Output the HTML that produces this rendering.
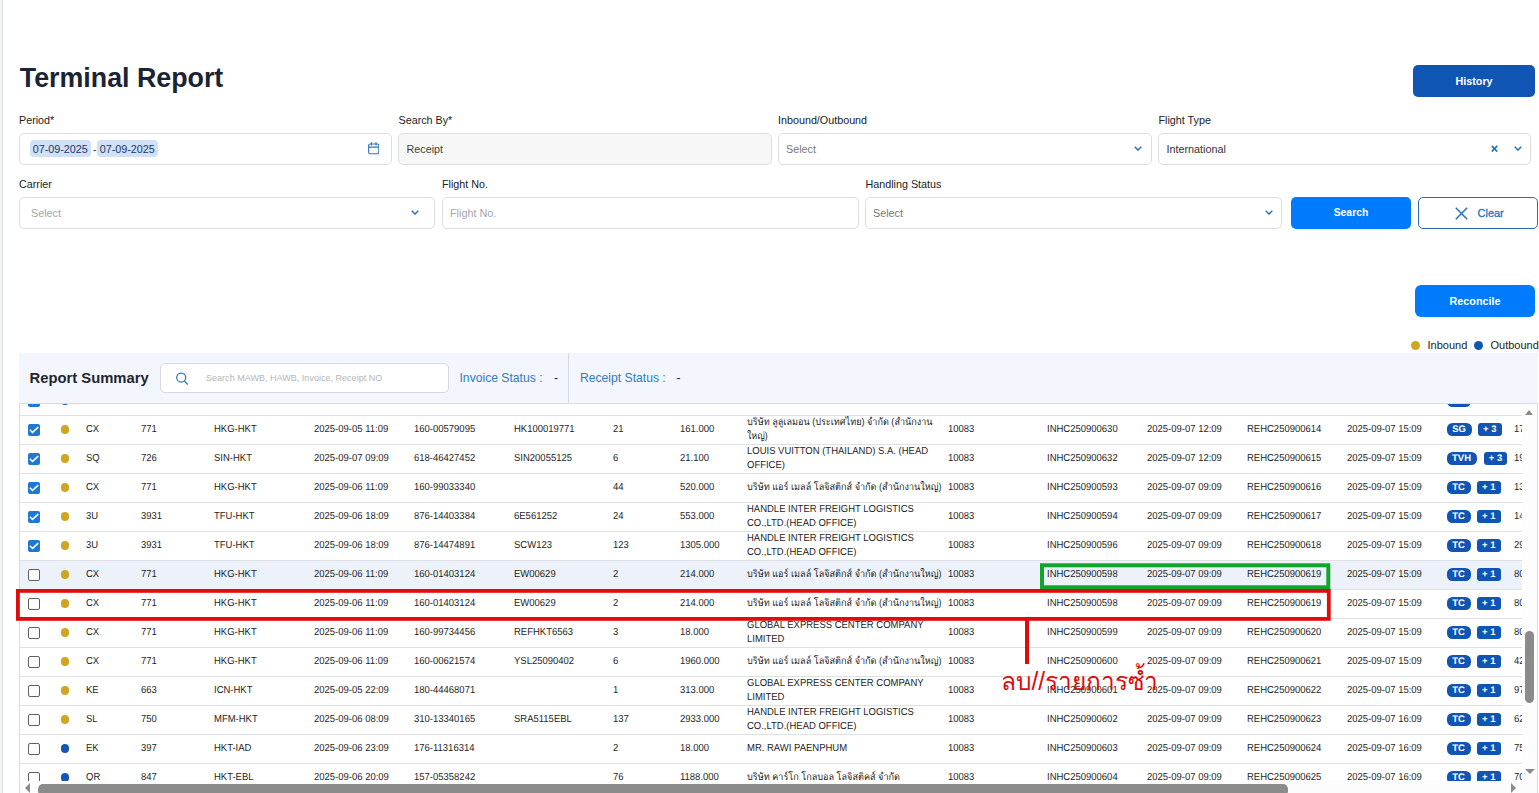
<!DOCTYPE html>
<html lang="en">
<head>
<meta charset="utf-8">
<title>Terminal Report</title>
<style>
*{box-sizing:border-box;margin:0;padding:0}
html,body{width:1539px;height:793px;overflow:hidden;background:#fff}
body{font-family:"Liberation Sans",sans-serif;color:#222;position:relative;font-size:11px}
.abs{position:absolute}
#lline{position:absolute;left:0;top:0;width:3px;height:793px;background:#f4f4f5;border-right:1px solid #d8dbe2}
h1{position:absolute;left:19.8px;top:60.7px;font-size:26.8px;line-height:34px;font-weight:700;color:#1b2432;white-space:nowrap;letter-spacing:0}
.lbl{position:absolute;font-size:10.75px;line-height:14px;color:#222;white-space:nowrap}
.inp{position:absolute;height:32px;border:1px solid #dcdfe2;border-radius:5px;background:#fff;font-size:10.8px;line-height:31px;color:#333;white-space:nowrap}
.inp .ph{position:absolute;left:11px;top:0;color:#a3a7ab}
.inp .val{position:absolute;left:7.5px;top:0;color:#444}
.inp svg{position:absolute}
.dis{background:#f7f7f8}
.hl{position:absolute;top:5.5px;height:17px;width:60.5px;border-radius:4px;background:#cfe0f7;color:#1c3766;line-height:18px;text-align:center;font-size:10.8px}
.btn{position:absolute;height:32px;border-radius:5px;color:#fff;font-weight:700;font-size:10.8px;line-height:32px;text-align:center;white-space:nowrap}
#hist{left:1413px;top:65px;width:122px;background:#1055b3}
#srch{left:1291px;top:197px;width:120px;background:#007bfd;font-size:10.4px}
#recon{left:1415px;top:285px;width:120px;background:#007bfd;border-radius:6px}
#clr{left:1418px;top:197px;width:120px;background:#fff;border:1px solid #2a6fad;color:#2274c4;font-weight:400}
#clr svg{position:absolute;left:36.4px;top:9px}
#clr span{position:absolute;left:58.5px;top:-1px;font-size:11px;-webkit-text-stroke:0.3px #2274c4}
.lg{position:absolute;top:338px;font-size:11px;line-height:14px;color:#222;white-space:nowrap}
.ldot{position:absolute;width:9.5px;height:9.5px;border-radius:50%;top:340.7px}
#panel{position:absolute;left:19px;top:353px;width:1519px;height:51px;background:#f3f6fc;border-bottom:1px solid #d5dce6}
#panel h2{position:absolute;left:10.5px;top:15px;font-size:14.8px;line-height:20px;font-weight:700;color:#1f2630;white-space:nowrap}
#sbox{position:absolute;left:141px;top:10px;width:289px;height:30px;border:1px solid #d6d9dd;border-radius:5px;background:#fff}
#sbox svg{position:absolute;left:15px;top:8px}
#sbox span{position:absolute;left:45px;top:0;line-height:28.6px;font-size:9.05px;color:#b4b6b8;white-space:nowrap}
.st{position:absolute;top:17px;font-size:12.15px;line-height:16px;color:#2b7dc3;white-space:nowrap}
.dash{position:absolute;top:17px;font-size:12px;line-height:16px;color:#222}
#vdiv{position:absolute;left:549px;top:0;width:1px;height:50px;background:#cfdbe8}
#tbl{position:absolute;left:19px;top:404px;width:1519px;height:377px;overflow:hidden;border-left:1px solid #d4dbe3;border-right:1px solid #d4dbe3;background:#fff}
.row{position:absolute;left:0;width:1502px;height:29px;border-top:1px solid #e0e1e4;font-size:10.2px;color:#1f1f1f;text-rendering:geometricPrecision}
.row.hov{background:#edf2fa}
.c{position:absolute;top:0;line-height:28px;white-space:nowrap;transform:scaleX(.931);transform-origin:0 50%}
.nm{position:absolute;top:0;line-height:28px;white-space:nowrap;transform:scaleX(.931);transform-origin:0 50%}
.nm.n2{line-height:14px;top:0}
.cb{position:absolute;left:8px;top:7.8px;width:12px;height:12px;border:1.3px solid #5f5f5f;border-radius:2px;background:#fff}
.cb.on{border:none;background:#1f78d1}
.cb svg{position:absolute;left:0;top:0}
.dot{position:absolute;left:40.7px;top:9.3px;width:8.8px;height:8.8px;border-radius:50%}
.dot.g,.ldot.g{background:#d0a620}
.dot.b,.ldot.b{background:#1358b0}
.bd{position:absolute;top:7px;height:12.5px;border-radius:5.5px;background:#1055b3;color:#fff;font-size:9.5px;line-height:14.3px;text-align:center;font-weight:700}
.pl{position:absolute;top:7px;height:12.5px;width:23.5px;border-radius:3px;background:#1055b3;color:#fff;font-size:9.5px;line-height:14.3px;text-align:center;font-weight:700;white-space:pre}
.th{position:absolute;overflow:visible}
.th text{font-family:"Liberation Sans",sans-serif}
#vsb{position:absolute;left:1521.5px;top:404px;width:15.5px;height:377px;background:#fdfdfd}
#vthumb{position:absolute;left:1525px;top:631px;width:9px;height:72px;border-radius:5px;background:#8b8b8b}
#hsb{position:absolute;left:19px;top:781px;width:1519px;height:12px;background:#fcfcfc;border-left:1px solid #d4dbe3;border-right:1px solid #d4dbe3}
#hthumb{position:absolute;left:38px;top:783.5px;width:1249.5px;height:12px;border-radius:5px;background:#8b8b8b}
.tri{position:absolute;width:0;height:0}
#annot{position:absolute;left:0;top:0;width:1539px;height:793px;pointer-events:none}
</style>
</head>
<body>
<div id="lline"></div>
<h1>Terminal Report</h1>
<div class="btn" id="hist">History</div>

<div class="lbl" style="left:19px;top:113.3px">Period*</div>
<div class="lbl" style="left:398.5px;top:113.3px">Search By*</div>
<div class="lbl" style="left:778px;top:113.3px">Inbound/Outbound</div>
<div class="lbl" style="left:1158.5px;top:113.3px">Flight Type</div>

<div class="inp" style="left:19px;top:133px;width:372.5px">
  <span class="hl" style="left:10px">07-09-2025</span>
  <span style="position:absolute;left:73px;top:0;color:#333">-</span>
  <span class="hl" style="left:77px">07-09-2025</span>
  <svg style="left:347.5px;top:8px" width="11.5" height="12.5" viewBox="0 0 12 13"><rect x="0.7" y="2.1" width="10.6" height="10.1" rx="1.5" fill="none" stroke="#2f77b3" stroke-width="1.2"/><path d="M0.7 5.4h10.6M3.6 0.3v3.4M8.4 0.3v3.4" stroke="#2f77b3" stroke-width="1.2" fill="none"/></svg>
</div>
<div class="inp dis" style="left:398px;top:133px;width:373.5px"><span class="val">Receipt</span></div>
<div class="inp" style="left:778px;top:133px;width:373.5px"><span class="ph" style="left:7px;color:#777">Select</span>
  <svg style="left:355.1px;top:12.3px" width="8" height="5" viewBox="0 0 8 5"><path d="M0.7 0.8l3.3 3.2L7.3 0.8" fill="none" stroke="#2a73b8" stroke-width="1.5"/></svg>
</div>
<div class="inp" style="left:1158px;top:133px;width:373px"><span class="val" style="color:#333">International</span>
  <svg style="left:331.6px;top:10.6px" width="7" height="7.4" viewBox="0 0 7 7.4"><path d="M0.8 0.8l5.4 5.8M6.2 0.8l-5.4 5.8" fill="none" stroke="#2a73b8" stroke-width="1.7"/></svg>
  <svg style="left:355.1px;top:12.3px" width="8" height="5" viewBox="0 0 8 5"><path d="M0.7 0.8l3.3 3.2L7.3 0.8" fill="none" stroke="#2a73b8" stroke-width="1.5"/></svg>
</div>

<div class="lbl" style="left:19px;top:177.3px">Carrier</div>
<div class="lbl" style="left:442px;top:177.3px">Flight No.</div>
<div class="lbl" style="left:865.5px;top:177.3px">Handling Status</div>

<div class="inp" style="left:19px;top:197px;width:416px"><span class="ph">Select</span>
  <svg style="left:391.1px;top:12.3px" width="8" height="5" viewBox="0 0 8 5"><path d="M0.7 0.8l3.3 3.2L7.3 0.8" fill="none" stroke="#2a73b8" stroke-width="1.5"/></svg>
</div>
<div class="inp" style="left:442px;top:197px;width:416.5px"><span class="ph" style="left:7px">Flight No.</span></div>
<div class="inp" style="left:865px;top:197px;width:417px"><span class="ph" style="left:7px;color:#777">Select</span>
  <svg style="left:398.6px;top:12.3px" width="8" height="5" viewBox="0 0 8 5"><path d="M0.7 0.8l3.3 3.2L7.3 0.8" fill="none" stroke="#2a73b8" stroke-width="1.5"/></svg>
</div>
<div class="btn" id="srch">Search</div>
<div class="btn" id="clr"><svg width="13" height="13" viewBox="0 0 13 13"><path d="M0.8 0.8l11.4 11.4M12.2 0.8L0.8 12.2" stroke="#2a6fb5" stroke-width="1.5" fill="none"/></svg><span>Clear</span></div>

<div class="btn" id="recon">Reconcile</div>

<i class="ldot g" style="left:1410.5px"></i><span class="lg" style="left:1427.5px">Inbound</span>
<i class="ldot b" style="left:1473.5px"></i><span class="lg" style="left:1490.5px">Outbound</span>

<div id="panel">
  <h2>Report Summary</h2>
  <div id="sbox"><svg width="13" height="14" viewBox="0 0 13 14"><circle cx="5.2" cy="5.5" r="4.5" fill="none" stroke="#2a73b8" stroke-width="1.25"/><path d="M8.3 8.9l3.4 3.6" stroke="#2a73b8" stroke-width="1.3" fill="none"/></svg><span>Search MAWB, HAWB, Invoice, Receipt NO</span></div>
  <span class="st" style="left:440.5px">Invoice Status :</span><span class="dash" style="left:535px">-</span>
  <div id="vdiv"></div>
  <span class="st" style="left:561px">Receipt Status :</span><span class="dash" style="left:657.5px">-</span>
</div>

<div id="tbl">
  <div class="row" style="top:-17px;border-top:none"><i class="cb on"><svg width="12" height="12" viewBox="0 0 12 12"><path d="M1.9 5.7L4.5 8.4 10.3 3.1" fill="none" stroke="#fff" stroke-width="1.5"/></svg></i><i class="dot b"></i><b class="bd" style="left:1426.5px;width:24px">TC</b></div>
<div class="row" style="top:11px"><i class="cb on"><svg width="12" height="12" viewBox="0 0 12 12"><path d="M1.9 5.7L4.5 8.4 10.3 3.1" fill="none" stroke="#fff" stroke-width="1.5"/></svg></i><i class="dot g"></i><span class="c" style="left:65.7px">CX</span><span class="c" style="left:120.5px">771</span><span class="c" style="left:193.6px">HKG-HKT</span><span class="c" style="left:293.6px">2025-09-05 11:09</span><span class="c" style="left:393.5px">160-00579095</span><span class="c" style="left:493.6px">HK100019771</span><span class="c" style="left:593.3px">21</span><span class="c" style="left:660.3px">161.000</span><svg class="th" style="left:727.00px;top:-1.90px" width="185.85" height="15.30"><text x="0" y="10.8" font-size="10" fill="#1c1c1c" textLength="185.5" lengthAdjust="spacingAndGlyphs">บริษัท ลูลูเลมอน (ประเทศไทย) จำกัด (สำนักงาน</text></svg><svg class="th" style="left:727.00px;top:12.10px" width="20.99" height="15.30"><text x="0" y="10.8" font-size="10" fill="#1c1c1c" textLength="20.8" lengthAdjust="spacingAndGlyphs">ใหญ่)</text></svg><span class="c" style="left:927.6px">10083</span><span class="c" style="left:1027px">INHC250900630</span><span class="c" style="left:1127px">2025-09-07 12:09</span><span class="c" style="left:1227px">REHC250900614</span><span class="c" style="left:1327px">2025-09-07 15:09</span><b class="bd" style="left:1426.5px;width:25px">SG</b><b class="pl" style="left:1458.0px">+ 3</b><span class="c" style="left:1493.5px">17</span></div>
<div class="row" style="top:40px"><i class="cb on"><svg width="12" height="12" viewBox="0 0 12 12"><path d="M1.9 5.7L4.5 8.4 10.3 3.1" fill="none" stroke="#fff" stroke-width="1.5"/></svg></i><i class="dot g"></i><span class="c" style="left:65.7px">SQ</span><span class="c" style="left:120.5px">726</span><span class="c" style="left:193.6px">SIN-HKT</span><span class="c" style="left:293.6px">2025-09-07 09:09</span><span class="c" style="left:393.5px">618-46427452</span><span class="c" style="left:493.6px">SIN20055125</span><span class="c" style="left:593.3px">6</span><span class="c" style="left:660.3px">21.100</span><span class="nm n2" style="left:727px">LOUIS VUITTON (THAILAND) S.A. (HEAD<br>OFFICE)</span><span class="c" style="left:927.6px">10083</span><span class="c" style="left:1027px">INHC250900632</span><span class="c" style="left:1127px">2025-09-07 12:09</span><span class="c" style="left:1227px">REHC250900615</span><span class="c" style="left:1327px">2025-09-07 15:09</span><b class="bd" style="left:1426.5px;width:30px">TVH</b><b class="pl" style="left:1463.8px">+ 3</b><span class="c" style="left:1493.5px">19</span></div>
<div class="row" style="top:69px"><i class="cb on"><svg width="12" height="12" viewBox="0 0 12 12"><path d="M1.9 5.7L4.5 8.4 10.3 3.1" fill="none" stroke="#fff" stroke-width="1.5"/></svg></i><i class="dot g"></i><span class="c" style="left:65.7px">CX</span><span class="c" style="left:120.5px">771</span><span class="c" style="left:193.6px">HKG-HKT</span><span class="c" style="left:293.6px">2025-09-06 11:09</span><span class="c" style="left:393.5px">160-99033340</span><span class="c" style="left:593.3px">44</span><span class="c" style="left:660.3px">520.000</span><svg class="th" style="left:727.00px;top:5.20px" width="194.92" height="15.30"><text x="0" y="10.8" font-size="10" fill="#1c1c1c" textLength="194.5" lengthAdjust="spacingAndGlyphs">บริษัท แอร์ เมลล์ โลจิสติกส์ จำกัด (สำนักงานใหญ่)</text></svg><span class="c" style="left:927.6px">10083</span><span class="c" style="left:1027px">INHC250900593</span><span class="c" style="left:1127px">2025-09-07 09:09</span><span class="c" style="left:1227px">REHC250900616</span><span class="c" style="left:1327px">2025-09-07 15:09</span><b class="bd" style="left:1426.5px;width:24px">TC</b><b class="pl" style="left:1457.0px">+ 1</b><span class="c" style="left:1493.5px">13</span></div>
<div class="row" style="top:98px"><i class="cb on"><svg width="12" height="12" viewBox="0 0 12 12"><path d="M1.9 5.7L4.5 8.4 10.3 3.1" fill="none" stroke="#fff" stroke-width="1.5"/></svg></i><i class="dot g"></i><span class="c" style="left:65.7px">3U</span><span class="c" style="left:120.5px">3931</span><span class="c" style="left:193.6px">TFU-HKT</span><span class="c" style="left:293.6px">2025-09-06 18:09</span><span class="c" style="left:393.5px">876-14403384</span><span class="c" style="left:493.6px">6E561252</span><span class="c" style="left:593.3px">24</span><span class="c" style="left:660.3px">553.000</span><span class="nm n2" style="left:727px">HANDLE INTER FREIGHT LOGISTICS<br>CO.,LTD.(HEAD OFFICE)</span><span class="c" style="left:927.6px">10083</span><span class="c" style="left:1027px">INHC250900594</span><span class="c" style="left:1127px">2025-09-07 09:09</span><span class="c" style="left:1227px">REHC250900617</span><span class="c" style="left:1327px">2025-09-07 15:09</span><b class="bd" style="left:1426.5px;width:24px">TC</b><b class="pl" style="left:1457.0px">+ 1</b><span class="c" style="left:1493.5px">14</span></div>
<div class="row" style="top:127px"><i class="cb on"><svg width="12" height="12" viewBox="0 0 12 12"><path d="M1.9 5.7L4.5 8.4 10.3 3.1" fill="none" stroke="#fff" stroke-width="1.5"/></svg></i><i class="dot g"></i><span class="c" style="left:65.7px">3U</span><span class="c" style="left:120.5px">3931</span><span class="c" style="left:193.6px">TFU-HKT</span><span class="c" style="left:293.6px">2025-09-06 18:09</span><span class="c" style="left:393.5px">876-14474891</span><span class="c" style="left:493.6px">SCW123</span><span class="c" style="left:593.3px">123</span><span class="c" style="left:660.3px">1305.000</span><span class="nm n2" style="left:727px">HANDLE INTER FREIGHT LOGISTICS<br>CO.,LTD.(HEAD OFFICE)</span><span class="c" style="left:927.6px">10083</span><span class="c" style="left:1027px">INHC250900596</span><span class="c" style="left:1127px">2025-09-07 09:09</span><span class="c" style="left:1227px">REHC250900618</span><span class="c" style="left:1327px">2025-09-07 15:09</span><b class="bd" style="left:1426.5px;width:24px">TC</b><b class="pl" style="left:1457.0px">+ 1</b><span class="c" style="left:1493.5px">29</span></div>
<div class="row hov" style="top:156px"><i class="cb"></i><i class="dot g"></i><span class="c" style="left:65.7px">CX</span><span class="c" style="left:120.5px">771</span><span class="c" style="left:193.6px">HKG-HKT</span><span class="c" style="left:293.6px">2025-09-06 11:09</span><span class="c" style="left:393.5px">160-01403124</span><span class="c" style="left:493.6px">EW00629</span><span class="c" style="left:593.3px">2</span><span class="c" style="left:660.3px">214.000</span><svg class="th" style="left:727.00px;top:5.20px" width="194.92" height="15.30"><text x="0" y="10.8" font-size="10" fill="#1c1c1c" textLength="194.5" lengthAdjust="spacingAndGlyphs">บริษัท แอร์ เมลล์ โลจิสติกส์ จำกัด (สำนักงานใหญ่)</text></svg><span class="c" style="left:927.6px">10083</span><span class="c" style="left:1027px">INHC250900598</span><span class="c" style="left:1127px">2025-09-07 09:09</span><span class="c" style="left:1227px">REHC250900619</span><span class="c" style="left:1327px">2025-09-07 15:09</span><b class="bd" style="left:1426.5px;width:24px">TC</b><b class="pl" style="left:1457.0px">+ 1</b><span class="c" style="left:1493.5px">80</span></div>
<div class="row" style="top:185px"><i class="cb"></i><i class="dot g"></i><span class="c" style="left:65.7px">CX</span><span class="c" style="left:120.5px">771</span><span class="c" style="left:193.6px">HKG-HKT</span><span class="c" style="left:293.6px">2025-09-06 11:09</span><span class="c" style="left:393.5px">160-01403124</span><span class="c" style="left:493.6px">EW00629</span><span class="c" style="left:593.3px">2</span><span class="c" style="left:660.3px">214.000</span><svg class="th" style="left:727.00px;top:5.20px" width="194.92" height="15.30"><text x="0" y="10.8" font-size="10" fill="#1c1c1c" textLength="194.5" lengthAdjust="spacingAndGlyphs">บริษัท แอร์ เมลล์ โลจิสติกส์ จำกัด (สำนักงานใหญ่)</text></svg><span class="c" style="left:927.6px">10083</span><span class="c" style="left:1027px">INHC250900598</span><span class="c" style="left:1127px">2025-09-07 09:09</span><span class="c" style="left:1227px">REHC250900619</span><span class="c" style="left:1327px">2025-09-07 15:09</span><b class="bd" style="left:1426.5px;width:24px">TC</b><b class="pl" style="left:1457.0px">+ 1</b><span class="c" style="left:1493.5px">80</span></div>
<div class="row" style="top:214px"><i class="cb"></i><i class="dot g"></i><span class="c" style="left:65.7px">CX</span><span class="c" style="left:120.5px">771</span><span class="c" style="left:193.6px">HKG-HKT</span><span class="c" style="left:293.6px">2025-09-06 11:09</span><span class="c" style="left:393.5px">160-99734456</span><span class="c" style="left:493.6px">REFHKT6563</span><span class="c" style="left:593.3px">3</span><span class="c" style="left:660.3px">18.000</span><span class="nm n2" style="left:727px">GLOBAL EXPRESS CENTER COMPANY<br>LIMITED</span><span class="c" style="left:927.6px">10083</span><span class="c" style="left:1027px">INHC250900599</span><span class="c" style="left:1127px">2025-09-07 09:09</span><span class="c" style="left:1227px">REHC250900620</span><span class="c" style="left:1327px">2025-09-07 15:09</span><b class="bd" style="left:1426.5px;width:24px">TC</b><b class="pl" style="left:1457.0px">+ 1</b><span class="c" style="left:1493.5px">80</span></div>
<div class="row" style="top:243px"><i class="cb"></i><i class="dot g"></i><span class="c" style="left:65.7px">CX</span><span class="c" style="left:120.5px">771</span><span class="c" style="left:193.6px">HKG-HKT</span><span class="c" style="left:293.6px">2025-09-06 11:09</span><span class="c" style="left:393.5px">160-00621574</span><span class="c" style="left:493.6px">YSL25090402</span><span class="c" style="left:593.3px">6</span><span class="c" style="left:660.3px">1960.000</span><svg class="th" style="left:727.00px;top:5.20px" width="194.92" height="15.30"><text x="0" y="10.8" font-size="10" fill="#1c1c1c" textLength="194.5" lengthAdjust="spacingAndGlyphs">บริษัท แอร์ เมลล์ โลจิสติกส์ จำกัด (สำนักงานใหญ่)</text></svg><span class="c" style="left:927.6px">10083</span><span class="c" style="left:1027px">INHC250900600</span><span class="c" style="left:1127px">2025-09-07 09:09</span><span class="c" style="left:1227px">REHC250900621</span><span class="c" style="left:1327px">2025-09-07 15:09</span><b class="bd" style="left:1426.5px;width:24px">TC</b><b class="pl" style="left:1457.0px">+ 1</b><span class="c" style="left:1493.5px">42</span></div>
<div class="row" style="top:272px"><i class="cb"></i><i class="dot g"></i><span class="c" style="left:65.7px">KE</span><span class="c" style="left:120.5px">663</span><span class="c" style="left:193.6px">ICN-HKT</span><span class="c" style="left:293.6px">2025-09-05 22:09</span><span class="c" style="left:393.5px">180-44468071</span><span class="c" style="left:593.3px">1</span><span class="c" style="left:660.3px">313.000</span><span class="nm n2" style="left:727px">GLOBAL EXPRESS CENTER COMPANY<br>LIMITED</span><span class="c" style="left:927.6px">10083</span><span class="c" style="left:1027px">INHC250900601</span><span class="c" style="left:1127px">2025-09-07 09:09</span><span class="c" style="left:1227px">REHC250900622</span><span class="c" style="left:1327px">2025-09-07 15:09</span><b class="bd" style="left:1426.5px;width:24px">TC</b><b class="pl" style="left:1457.0px">+ 1</b><span class="c" style="left:1493.5px">97</span></div>
<div class="row" style="top:301px"><i class="cb"></i><i class="dot g"></i><span class="c" style="left:65.7px">SL</span><span class="c" style="left:120.5px">750</span><span class="c" style="left:193.6px">MFM-HKT</span><span class="c" style="left:293.6px">2025-09-06 08:09</span><span class="c" style="left:393.5px">310-13340165</span><span class="c" style="left:493.6px">SRA5115EBL</span><span class="c" style="left:593.3px">137</span><span class="c" style="left:660.3px">2933.000</span><span class="nm n2" style="left:727px">HANDLE INTER FREIGHT LOGISTICS<br>CO.,LTD.(HEAD OFFICE)</span><span class="c" style="left:927.6px">10083</span><span class="c" style="left:1027px">INHC250900602</span><span class="c" style="left:1127px">2025-09-07 09:09</span><span class="c" style="left:1227px">REHC250900623</span><span class="c" style="left:1327px">2025-09-07 16:09</span><b class="bd" style="left:1426.5px;width:24px">TC</b><b class="pl" style="left:1457.0px">+ 1</b><span class="c" style="left:1493.5px">62</span></div>
<div class="row" style="top:330px"><i class="cb"></i><i class="dot b"></i><span class="c" style="left:65.7px">EK</span><span class="c" style="left:120.5px">397</span><span class="c" style="left:193.6px">HKT-IAD</span><span class="c" style="left:293.6px">2025-09-06 23:09</span><span class="c" style="left:393.5px">176-11316314</span><span class="c" style="left:593.3px">2</span><span class="c" style="left:660.3px">18.000</span><span class="nm" style="left:727px">MR. RAWI PAENPHUM</span><span class="c" style="left:927.6px">10083</span><span class="c" style="left:1027px">INHC250900603</span><span class="c" style="left:1127px">2025-09-07 09:09</span><span class="c" style="left:1227px">REHC250900624</span><span class="c" style="left:1327px">2025-09-07 16:09</span><b class="bd" style="left:1426.5px;width:24px">TC</b><b class="pl" style="left:1457.0px">+ 1</b><span class="c" style="left:1493.5px">75</span></div>
<div class="row" style="top:359px"><i class="cb"></i><i class="dot b"></i><span class="c" style="left:65.7px">QR</span><span class="c" style="left:120.5px">847</span><span class="c" style="left:193.6px">HKT-EBL</span><span class="c" style="left:293.6px">2025-09-06 20:09</span><span class="c" style="left:393.5px">157-05358242</span><span class="c" style="left:593.3px">76</span><span class="c" style="left:660.3px">1188.000</span><svg class="th" style="left:727.00px;top:5.20px" width="153.26" height="15.30"><text x="0" y="10.8" font-size="10" fill="#1c1c1c" textLength="153" lengthAdjust="spacingAndGlyphs">บริษัท คาร์โก โกลบอล โลจิสติคส์ จำกัด</text></svg><span class="c" style="left:927.6px">10083</span><span class="c" style="left:1027px">INHC250900604</span><span class="c" style="left:1127px">2025-09-07 09:09</span><span class="c" style="left:1227px">REHC250900625</span><span class="c" style="left:1327px">2025-09-07 16:09</span><b class="bd" style="left:1426.5px;width:24px">TC</b><b class="pl" style="left:1457.0px">+ 1</b><span class="c" style="left:1493.5px">70</span></div>
</div>
<div id="vsb"></div>
<div id="vthumb"></div>
<i class="tri" style="left:1524.5px;top:409.5px;border-left:4.85px solid transparent;border-right:4.85px solid transparent;border-bottom:5.5px solid #8b8b8b"></i>
<i class="tri" style="left:1524.5px;top:769px;border-left:5px solid transparent;border-right:5px solid transparent;border-top:5.5px solid #8b8b8b"></i>
<div id="hsb"></div>
<div id="hthumb"></div>
<i class="tri" style="left:25px;top:783px;border-top:5px solid transparent;border-bottom:5px solid transparent;border-right:5px solid #8b8b8b"></i>
<i class="tri" style="left:1511px;top:783px;border-top:5px solid transparent;border-bottom:5px solid transparent;border-left:5px solid #8b8b8b"></i>

<svg id="annot" viewBox="0 0 1539 793">
  <rect x="1042" y="565.3" width="286.3" height="22" fill="none" stroke="#12a52c" stroke-width="4"/>
  <rect x="17.9" y="590.9" width="1310.9" height="28" fill="none" stroke="#e00b0b" stroke-width="3.8"/>
  <rect x="1025" y="620" width="4" height="44" fill="#e00b0b"/>
</svg>
<svg class="th" style="left:999.60px;top:658.08px" width="159.54" height="45.22"><text x="1" y="31.9" font-size="25" fill="#e00b0b" textLength="157" lengthAdjust="spacingAndGlyphs">ลบ//รายการซ้ำ</text></svg>
</body>
</html>
